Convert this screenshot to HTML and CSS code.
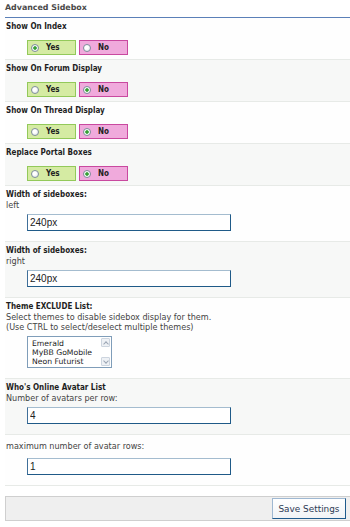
FILE: index.html
```html
<!DOCTYPE html>
<html lang="en">

<head>
    <meta charset="UTF-8">
    <meta name="viewport" content="width=device-width, initial-scale=1.0">
    <title>Advanced Sidebox Settings</title>
    <link rel="stylesheet" href="styles.css">
</head>

<body>
    <form class="panel">
        <div class="panel-head">Advanced Sidebox</div>

        <div class="row">
            <div class="row-label">Show On Index</div>
            <div class="yesno">
                <label class="opt opt-yes"><input type="radio" name="index" checked> Yes</label>
                <label class="opt opt-no"><input type="radio" name="index"> No</label>
            </div>
        </div>
        <div class="row alt">
            <div class="row-label">Show On Forum Display</div>
            <div class="yesno">
                <label class="opt opt-yes"><input type="radio" name="forum"> Yes</label>
                <label class="opt opt-no"><input type="radio" name="forum" checked> No</label>
            </div>
        </div>
        <div class="row">
            <div class="row-label">Show On Thread Display</div>
            <div class="yesno">
                <label class="opt opt-yes"><input type="radio" name="thread"> Yes</label>
                <label class="opt opt-no"><input type="radio" name="thread" checked> No</label>
            </div>
        </div>
        <div class="row alt">
            <div class="row-label">Replace Portal Boxes</div>
            <div class="yesno">
                <label class="opt opt-yes"><input type="radio" name="portal"> Yes</label>
                <label class="opt opt-no"><input type="radio" name="portal" checked> No</label>
            </div>
        </div>

        <div class="row">
            <div class="row-label">Width of sideboxes:</div>
            <div class="desc">left</div>
            <div class="field"><input class="text" type="text" value="240px"></div>
        </div>
        <div class="row alt">
            <div class="row-label">Width of sideboxes:</div>
            <div class="desc">right</div>
            <div class="field"><input class="text" type="text" value="240px"></div>
        </div>

        <div class="row">
            <div class="row-label">Theme EXCLUDE List:</div>
            <div class="desc">Select themes to disable sidebox display for them.</div>
            <div class="desc">(Use CTRL to select/deselect multiple themes)</div>
            <div class="field">
                <div class="listbox">
                    <ul class="options">
                        <li>Emerald</li>
                        <li>MyBB GoMobile</li>
                        <li>Neon Futurist</li>
                    </ul>
                    <div class="scroll">
                        <span class="arrow up"></span>
                        <span class="arrow down"></span>
                    </div>
                </div>
            </div>
        </div>

        <div class="row alt">
            <div class="row-label">Who's Online Avatar List</div>
            <div class="desc">Number of avatars per row:</div>
            <div class="field"><input class="text" type="text" value="4"></div>
        </div>
        <div class="row row-plain">
            <div class="desc">maximum number of avatar rows:</div>
            <div class="field"><input class="text" type="text" value="1"></div>
        </div>

        <div class="submit">
            <button type="button" class="save">Save Settings</button>
        </div>
    </form>
</body>

</html>
```

FILE: styles.css
```css
body {
    margin: 0;
    padding: 0 0 0 5px;
    background: #fff;
    font-family: "DejaVu Sans", Verdana, sans-serif;
    color: #222;
}

.panel {
    width: 345px;
}

.panel-head {
    padding: 3px 0 4px 0;
    line-height: 10px;
    font-size: 7.9px;
    font-weight: bold;
    color: #4a4a4a;
    border-bottom: 1px solid #5b80b8;
}

.row {
    padding: 4px 0 4px 1px;
    background: #fefefe;
    border-bottom: 1px solid #e7eae7;
}

.row.alt {
    background: #f7f8f7;
}

.row-label {
    line-height: 10px;
    font-family: "DejaVu Sans Condensed", "DejaVu Sans", sans-serif;
    font-stretch: condensed;
    font-size: 8px;
    font-weight: bold;
    color: #1e1e1e;
}

.desc {
    line-height: 10px;
    font-size: 8.1px;
    color: #444;
}

/* yes / no switches */

.yesno {
    display: flex;
    gap: 3px;
    margin-top: 8px;
    padding-left: 21px;
}

.opt {
    box-sizing: border-box;
    width: 49px;
    height: 15px;
    display: flex;
    align-items: center;
    gap: 7px;
    padding-left: 3px;
    font-family: "DejaVu Sans Condensed", "DejaVu Sans", sans-serif;
    font-stretch: condensed;
    font-size: 8px;
    font-weight: bold;
    color: #222;
}

.opt-yes {
    background: #d5eba3;
    border: 1px solid #93c95a;
}

.opt-no {
    background: #f0aadc;
    border: 1px solid #c9499f;
}

.opt input {
    appearance: none;
    -webkit-appearance: none;
    width: 8px;
    height: 8px;
    margin: 0;
    border: 1px solid #7f8e9c;
    border-radius: 50%;
    background: radial-gradient(circle at 40% 35%, #fff 0, #fff 30%, #dbe0e5 100%);
}

.opt input:checked {
    background: radial-gradient(circle, #35a035 0, #35a035 1.4px, #fff 2.2px, #dde2e6 100%);
}

/* text inputs */

.field {
    margin: 4px 0 6px 0;
    padding-left: 21px;
}

.row-plain {
    padding-top: 6px;
}

.row-plain .field {
    margin-top: 7px;
}

.text {
    box-sizing: border-box;
    display: block;
    width: 204px;
    height: 17px;
    margin: 0;
    padding: 0 2px;
    font-family: "Liberation Sans", Arial, sans-serif;
    font-size: 10px;
    color: #222;
    background: #fff;
    border: 1px solid;
    border-color: #a4bccf #1f5a88 #1f5a88 #3f6f99;
    outline: none;
}

.listbox {
    box-sizing: border-box;
    width: 85px;
    height: 32px;
    display: flex;
    border: 1px solid #7f9db9;
    background: #fff;
}

.options {
    flex: 1;
    margin: 0;
    padding: 2px 0 0 4px;
    list-style: none;
    font-size: 7.7px;
    line-height: 9px;
    color: #222;
}

.scroll {
    width: 9px;
    padding: 1px 1px 1px 0;
    display: flex;
    flex-direction: column;
    justify-content: space-between;
}

.arrow {
    box-sizing: border-box;
    width: 9px;
    height: 9px;
    display: flex;
    align-items: center;
    justify-content: center;
    background: #eef1f5;
    border: 1px solid #cdd5df;
    border-radius: 1px;
}

.arrow::after {
    content: "";
    width: 3px;
    height: 3px;
    border-left: 1px solid #9aa5b3;
    border-top: 1px solid #9aa5b3;
}

.arrow.up::after {
    transform: translateY(1px) rotate(45deg);
}

.arrow.down::after {
    transform: translateY(-1px) rotate(225deg);
}

/* footer */

.submit {
    box-sizing: border-box;
    height: 25px;
    margin-top: 10px;
    padding: 1px 4px 0 0;
    display: flex;
    justify-content: flex-end;
    background: #efefef;
    border: 1px solid #cfcfcf;
    border-right: none;
}

.save {
    box-sizing: border-box;
    width: 74px;
    height: 21px;
    padding: 0;
    font-family: "DejaVu Sans", Verdana, sans-serif;
    font-size: 8.9px;
    color: #2d3a55;
    background: linear-gradient(#ffffff, #f1f3f6);
    border: 1px solid;
    border-color: #9fb8d2 #1f5a8c #1f5a8c #9fb8d2;
    cursor: pointer;
}
```
